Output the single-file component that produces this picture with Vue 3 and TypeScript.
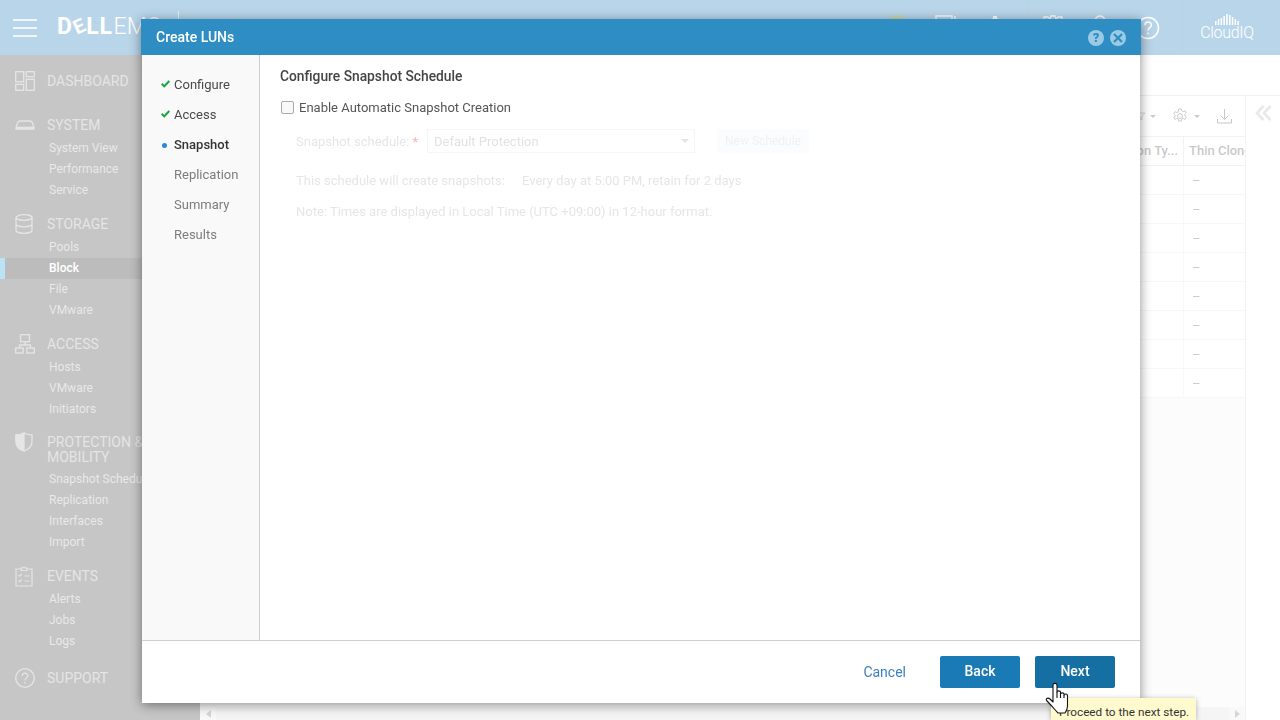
<script setup lang="ts">
interface NavGroup {
  icon: string
  title: string
  cls?: string
  items: string[]
}

const nav: NavGroup[] = [
  { icon: 'dash', title: 'DASHBOARD', cls: 'solo', items: [] },
  { icon: 'system', title: 'SYSTEM', items: ['System View', 'Performance', 'Service'] },
  { icon: 'storage', title: 'STORAGE', items: ['Pools', 'Block', 'File', 'VMware'] },
  { icon: 'access', title: 'ACCESS', items: ['Hosts', 'VMware', 'Initiators'] },
  { icon: 'shield', title: 'PROTECTION &\nMOBILITY', cls: 'tall', items: ['Snapshot Schedules', 'Replication', 'Interfaces', 'Import'] },
  { icon: 'events', title: 'EVENTS', cls: 'events', items: ['Alerts', 'Jobs', 'Logs'] },
  { icon: 'support', title: 'SUPPORT', cls: 'support', items: [] }
]

const steps = [
  { label: 'Configure', state: 'done' },
  { label: 'Access', state: 'done' },
  { label: 'Snapshot', state: 'active' },
  { label: 'Replication', state: 'todo' },
  { label: 'Summary', state: 'todo' },
  { label: 'Results', state: 'todo' }
]

const rows: number[] = [1, 2, 3, 4, 5, 6, 7, 8]
</script>

<template>
  <div class="shell">
    <header class="top">
      <div class="burger"><i></i><i></i><i></i></div>
      <div class="logo"><b>D<span class="tilt">E</span>LL</b><span class="emc">EMC</span></div>
      <div class="logo-sep"></div>
      <div class="top-fill"></div>
      <div class="cell"><span class="user-dot"></span></div>
      <div class="cell">
        <svg width="22" height="24" viewBox="0 0 22 24" fill="none" stroke="#fff" stroke-width="1.4"><rect x="1" y="1" width="16" height="14" /><path d="M4 5h8M20 1v14" /></svg>
      </div>
      <div class="cell">
        <svg width="20" height="24" viewBox="0 0 20 24" fill="#fff"><path d="M8 1h4v2c3 1 4 3 4 6v6l2 2H2l2-2V9c0-3 1-5 4-6z" /></svg>
      </div>
      <div class="cell first-right">
        <svg width="24" height="24" viewBox="0 0 24 24" fill="none" stroke="#fff" stroke-width="1.3"><path d="M3 2h4l2 2 1-3h4l1 3 2-2h4v14H3z" /></svg>
      </div>
      <div class="cell">
        <svg width="22" height="24" viewBox="0 0 22 24" fill="none" stroke="#fff" stroke-width="1.4"><circle cx="11" cy="6" r="5" /></svg>
      </div>
      <div class="cell">
        <svg width="24" height="24" viewBox="0 0 24 24" fill="none" stroke="#fff" stroke-width="1.5"><circle cx="12" cy="12" r="10.5" /><path d="M8.800 9.200c0-4.200 6.600-4.200 6.600-.2 0 2.600-3.300 2.800-3.300 5.600" /><path d="M12.100 16.400v1.800" /></svg>
      </div>
      <div class="cloud">
        <svg width="26" height="11" viewBox="0 0 26 11" fill="#fff"><path d="M1 7h1.500v4H1zM3.800 5h1.500v6H3.800zM6.600 4h1.500v7H6.600zM9.400 2h1.500v9H9.400zM12.200 0h1.500v11h-1.500zM15 1h1.500v10H15zM17.800 3h1.500v8h-1.500zM20.600 5h1.500v6h-1.500zM23.400 7h1.500v4h-1.500z" /></svg>
        <span>CloudIQ</span>
      </div>
    </header>

    <aside class="side">
      <section v-for="g in nav" :key="g.title" class="group" :class="g.cls">
        <div class="heading">
          <span class="ico">
            <svg v-if="g.icon === 'dash'" width="20" height="20" viewBox="0 0 20 20" fill="none" stroke="currentColor" stroke-width="1.3"><rect x="0.700" y="0.700" width="8" height="10" /><rect x="11.300" y="0.700" width="8" height="5" /><rect x="0.700" y="13.300" width="8" height="6" /><rect x="11.300" y="8.300" width="8" height="11" /></svg>
            <svg v-else-if="g.icon === 'system'" width="20" height="12" viewBox="0 0 20 12" fill="none" stroke="currentColor" stroke-width="1.3"><path d="M1 8.500l1.500-4.500C3 2.500 4 2 5 2h10c1 0 2 .5 2.500 2L19 8.500v1.500H1zM1 8.500h18" /></svg>
            <svg v-else-if="g.icon === 'storage'" width="18" height="20" viewBox="0 0 18 20" fill="none" stroke="currentColor" stroke-width="1.3"><ellipse cx="9" cy="3.500" rx="8" ry="2.800" /><path d="M1 3.500v13c0 1.500 3.500 2.800 8 2.800s8-1.300 8-2.800v-13M1 10c0 1.500 3.500 2.800 8 2.800s8-1.300 8-2.800" /></svg>
            <svg v-else-if="g.icon === 'access'" width="20" height="20" viewBox="0 0 20 20" fill="none" stroke="currentColor" stroke-width="1.300"><rect x="5.500" y="0.700" width="9" height="7" /><rect x="0.700" y="14" width="7.500" height="5" /><rect x="11.800" y="14" width="7.500" height="5" /><path d="M10 7.700v3.300M4.500 14v-3h11v3" /></svg>
            <svg v-else-if="g.icon === 'shield'" width="18" height="20" viewBox="0 0 18 20" fill="none" stroke="currentColor" stroke-width="1.300"><path d="M9 1c2.500 1.500 5 2 8 2v6c0 5-3.500 8.500-8 10C4.500 17.500 1 14 1 9V3c3 0 5.500-.5 8-2z" /><path d="M9 1c-2.500 1.500-5 2-8 2v6c0 5 3.500 8.500 8 10z" fill="currentColor" /></svg>
            <svg v-else-if="g.icon === 'events'" width="18" height="21" viewBox="0 0 18 21" fill="none" stroke="currentColor" stroke-width="1.200"><path d="M6 3H1v17h16V3h-5M6 4.500V2h2l1-1 1 1h2v2.500z" /><path d="M3.500 9l1.200 1.200L7 8M3.500 14.500l1.200 1.200L7 13.500M9.500 10h5M9.500 15h5" /></svg>
            <svg v-else width="20" height="20" viewBox="0 0 20 20" fill="none" stroke="currentColor" stroke-width="1.300"><circle cx="10" cy="10" r="9.300" /><path d="M7.300 7.800c0-3.500 5.500-3.500 5.500-.1 0 2.100-2.800 2.300-2.800 4.700M10 14v1.600" /></svg>
          </span>
          <span class="title">{{ g.title }}</span>
        </div>
        <div v-for="it in g.items" :key="it" class="item" :class="{ current: it === 'Block' }">{{ it }}</div>
      </section>
    </aside>

    <main class="page">
      <div class="page-head"></div>
      <div class="page-body">
        <div class="data">
          <div class="tools">
            <svg width="8" height="8" viewBox="0 0 8 8" fill="none" stroke="#777" stroke-width="1"><path d="M0 1h8L5 4v4L3 7V4z" /></svg>
            <span class="caret"></span>
            <svg class="gear" width="16" height="16" viewBox="0 0 16 16" fill="none" stroke="#555" stroke-width="1"><path d="M6.700 1h2.600l.4 2 1.500.7 1.800-1 1.300 2.300-1.500 1.300v1.500l1.500 1.300-1.300 2.300-1.800-1-1.500.7-.4 2H6.700l-.4-2-1.500-.7-1.800 1-1.300-2.300L3.200 8.700V7.200L1.700 5.900 3 3.600l1.800 1 1.500-.7z" /><circle cx="8" cy="8" r="2.500" /></svg>
            <span class="caret"></span>
            <svg class="dl" width="15" height="15" viewBox="0 0 15 15" fill="none" stroke="#444" stroke-width="1"><path d="M7.500 0v10M3.500 6.500l4 4 4-4M.500 10v4h14v-4" /></svg>
          </div>
          <div class="grid">
            <div class="tr th">
              <div class="c1">Protection Ty...</div>
              <div class="c2">Thin Clones</div>
            </div>
            <div v-for="r in rows" :key="r" class="tr td">
              <div class="c1"></div>
              <div class="c2">--</div>
            </div>
          </div>
          <div class="hscroll">
            <span class="arrow left"></span>
            <span class="thumb"></span>
            <span class="arrow right"></span>
          </div>
        </div>
        <div class="rail">
          <svg width="17" height="16" viewBox="0 0 17 16" fill="none" stroke="#b4b4b4" stroke-width="2.600"><path d="M8.500 1L2 8l6.500 7M15.500 1L9 8l6.500 7" /></svg>
        </div>
      </div>
    </main>

    <div class="veil"></div>

    <div class="modal">
      <div class="modal-head">
        <span>Create LUNs</span>
        <div class="head-icons">
          <span class="round">?</span>
          <span class="round">
            <svg width="10" height="10" viewBox="0 0 10 10" stroke="#2e8dc2" stroke-width="2.200"><path d="M1 1l8 8M9 1l-8 8" /></svg>
          </span>
        </div>
      </div>
      <div class="modal-body">
        <nav class="steps">
          <div v-for="s in steps" :key="s.label" class="step" :class="s.state">
            <span class="mark">
              <svg v-if="s.state === 'done'" width="9" height="8" viewBox="0 0 9 8" fill="none" stroke="#12a53c" stroke-width="2"><path d="M.7 3.800l2.500 2.600L8.300 1" /></svg>
              <i v-else-if="s.state === 'active'"></i>
            </span>
            {{ s.label }}
          </div>
        </nav>
        <section class="pane">
          <h2>Configure Snapshot Schedule</h2>
          <label class="enable"><span class="box"></span>Enable Automatic Snapshot Creation</label>
          <div class="off">
            <div class="off-row">
              <span class="off-label">Snapshot schedule:<em> *</em></span>
              <span class="select">Default Protection<i></i></span>
              <span class="new">New Schedule</span>
            </div>
            <div class="off-line"><span class="lead">This schedule will create snapshots:</span>Every day at 5:00 PM, retain for 2 days</div>
            <div class="off-line note">Note: Times are displayed in Local Time (UTC +09:00) in 12-hour format.</div>
          </div>
        </section>
      </div>
      <footer class="modal-foot">
        <span class="cancel">Cancel</span>
        <span class="btn back">Back</span>
        <span class="btn next">Next</span>
      </footer>
    </div>

    <div class="tip">Proceed to the next step.</div>
    <svg class="hand" width="26" height="33" viewBox="0 0 26 33" fill="#fff" stroke="#111" stroke-width="1.100" stroke-linejoin="round">
      <path d="M8 3C8 .8 12 .8 12 3v7c0-1.500 3.500-1.500 3.500 0v2c0-1.500 3.500-1.500 3.500 0v1c0-1.500 3.500-1.500 3.500.5V24c0 3-1 5-2.500 7h-7c-2-2-6-7-11-12-2-2 .5-4 3-2l3 3z" />
      <path d="M12 10v6M15.500 12v4M19 13v3" fill="none" />
    </svg>
  </div>
</template>

<style>
html, body { margin: 0; background: #fff; }
</style>

<style scoped>
.shell {
  position: relative;
  width: 1280px;
  height: 720px;
  overflow: hidden;
  display: grid;
  grid-template-columns: 200px 1fr;
  grid-template-rows: 55px 1fr;
  font-family: Roboto, "Liberation Sans", sans-serif;
  background: #fff;
}

/* top bar */
.top {
  grid-column: 1 / 3;
  display: flex;
  align-items: center;
  background: #1673b6;
  color: #fff;
}
.burger { width: 24px; margin-left: 13px; display: flex; flex-direction: column; gap: 6px; }
.burger i { display: block; height: 2px; background: #c8dcec; }
.logo { margin-left: 20px; width: 121px; display: flex; font-size: 23px; line-height: 24px; white-space: nowrap; position: relative; top: -1px; }
.logo b { font-weight: 700; letter-spacing: .7px; }
.tilt { display: inline-block; transform: rotate(-25deg) scale(.85); }
.emc { font-weight: 300; margin-left: 1px; }
.logo-sep { width: 1px; height: 34px; background: #a9c9e0; }
.top-fill { flex: 1; }
.cell { width: 49px; height: 55px; display: flex; align-items: flex-start; justify-content: center; padding-top: 15px; box-sizing: border-box; }
.cell.first-right { border-left: 1px solid #1268a8; margin-left: 9px; width: 48px; }
.cell:nth-last-child(2), .cell:nth-last-child(3) { width: 48px; }
.cell:nth-last-child(2) { padding-top: 16px; }
.user-dot { width: 24px; height: 24px; border-radius: 50%; background: #4b7600; }
.cloud {
  width: 52px;
  height: 55px;
  margin-left: 10px;
  padding: 0 27px 0 18px;
  border-left: 1px solid #1268a8;
  display: flex;
  flex-direction: column;
  align-items: center;
  justify-content: center;
  font-size: 16px;
  font-weight: 300;
  line-height: 17px;
  letter-spacing: -.3px;
}
.cloud svg { margin-bottom: -1px; }

/* sidebar */
.side {
  background: #414141;
  color: #a8a8a8;
  padding-top: 15px;
  overflow: hidden;
}
.group { margin-bottom: 12px; }
.group.solo { margin-bottom: 22px; }
.group.events { margin-bottom: 15px; }
.heading { display: flex; align-items: center; height: 22px; margin-bottom: 2px; }
.tall .heading { height: 35px; }
.solo .heading, .support .heading { margin-bottom: 0; }
.ico { width: 47px; padding-left: 15px; box-sizing: border-box; display: flex; align-items: center; flex: none; }
.ico svg { display: block; }
.tall .ico { align-self: flex-start; }
.title { font-size: 14px; line-height: 15px; white-space: pre-line; }
.item { height: 21px; line-height: 21px; font-size: 12px; padding-left: 49px; white-space: nowrap; color: #b4b4b4; }
.item.current { background: #1f1f1f; color: #fff; font-weight: 500; box-shadow: inset 5px 0 0 #1ba0e2; }

/* page */
.page { display: flex; flex-direction: column; min-width: 0; background: #fff; }
.page-head { height: 40px; flex: none; }
.page-body { flex: 1; display: flex; min-height: 0; border-top: 1px solid #c9c9c9; }
.data { flex: 1; min-width: 0; display: flex; flex-direction: column; background: #f4f4f4; }
.tools {
  height: 41px;
  flex: none;
  background: #fff;
  display: flex;
  align-items: center;
  justify-content: flex-end;
  padding-right: 13px;
  border-bottom: 1px solid #d2d2d2;
  box-sizing: border-box;
}
.caret { width: 0; height: 0; border: 3px solid transparent; border-top: 3.500px solid #555; border-bottom: 0; margin-left: 5px; }
.gear { margin-left: 16px; }
.tools .gear + .caret { margin-left: 6px; }
.dl { margin-left: 17px; }
.grid { flex: 1; display: flex; flex-direction: column; }
.tr { display: flex; justify-content: flex-end; height: 29px; box-sizing: border-box; flex: none; background: #fff; border-bottom: 1px solid #e4e4e4; }
.th { font-size: 13px; color: #4a4a4a; font-weight: 500; line-height: 28px; border-bottom: 1px solid #d2d2d2; }
.td { font-size: 12px; color: #444; line-height: 28px; }
.c1 { width: 144px; text-align: right; padding-right: 5px; box-sizing: border-box; white-space: nowrap; border-right: 1px solid #d2d2d2; }
.td .c1, .td .c2 { border-color: #ececec; }
.c2 { width: 61px; padding-left: 5px; box-sizing: border-box; white-space: nowrap; overflow: hidden; }
.td .c2 { padding-left: 9px; }
.hscroll { height: 13px; flex: none; display: flex; align-items: center; background: #ececec; }
.thumb { flex: 1; height: 13px; background: #dcdcdc; margin: 0 6px 0 5px; }
.arrow { width: 0; height: 0; border: 4px solid transparent; }
.arrow.left { border-right: 5px solid #777; border-left: 0; margin-left: 6px; }
.arrow.right { border-left: 5px solid #777; border-right: 0; margin-right: 5px; }
.rail { width: 35px; flex: none; border-left: 1px solid #d2d2d2; background: #fff; box-sizing: border-box; padding: 9px 0 0 9px; }
.rail svg { display: block; }

/* veil and dialog */
.veil { position: absolute; inset: 0; background: rgba(255, 255, 255, .7); }
.modal {
  position: absolute;
  left: 141px;
  top: 19px;
  width: 1000px;
  height: 684px;
  display: flex;
  flex-direction: column;
  filter: drop-shadow(0 2px 6px rgba(0, 0, 0, .45));
}
.modal-head {
  height: 36px;
  flex: none;
  display: flex;
  align-items: center;
  justify-content: space-between;
  padding: 0 15px 1px 15px;
  box-sizing: border-box;
  background: #2e8dc2;
  color: #fff;
  font-size: 14px;
  font-weight: 500;
}
.head-icons { display: flex; gap: 6px; position: relative; top: 1px; }
.round { width: 16px; height: 16px; border-radius: 50%; background: #9ccae4; color: #2e8dc2; display: flex; align-items: center; justify-content: center; font-size: 13px; font-weight: 900; }
.modal-body { flex: 1; display: flex; min-height: 0; margin: 0 1px; background: #fff; }
.steps { width: 117px; flex: none; padding-top: 15px; box-sizing: content-box; background: #f9f9f9; border-right: 1px solid #cfcfcf; }
.step { height: 30px; line-height: 30px; font-size: 13px; display: flex; color: #7d7d7d; }
.step.done { color: #4a4a4a; }
.step.active { color: #333; font-weight: 500; }
.mark { width: 32px; padding-left: 19px; box-sizing: border-box; display: flex; align-items: center; flex: none; }
.mark svg { margin-top: -2px; }
.mark i { width: 5px; height: 5px; margin-left: 1px; border-radius: 50%; background: #2e86d8; }
.pane { flex: 1; padding: 0 20px; min-width: 0; }
.pane h2 { margin: 0; padding-top: 13px; font-size: 13.800px; line-height: 17px; font-weight: 500; color: #444; }
.enable { display: flex; align-items: center; height: 20px; margin-top: 12px; font-size: 13px; color: #555; }
.box { width: 11px; height: 11px; margin: 0 5px 0 1px; border: 1px solid #aaa; border-radius: 2px; background: #f8f8f8; }
.off { padding-left: 16px; color: #e6e6e6; font-size: 13px; }
.off-row { display: flex; align-items: center; height: 24px; margin-top: 12px; }
.off-label { width: 131px; flex: none; }
.off-label em { font-style: normal; color: #f8b4b4; }
.select {
  position: relative;
  width: 268px;
  height: 24px;
  line-height: 24px;
  box-sizing: border-box;
  padding-left: 6px;
  border: 1px solid #f6f6f6;
  color: #e2e2e2;
}
.select i { position: absolute; right: 5px; top: 9px; width: 0; height: 0; border: 4px solid transparent; border-top: 4px solid #e4e4e4; border-bottom: 0; }
.new { width: 92px; height: 24px; margin-left: 22px; line-height: 24px; text-align: center; font-size: 12px; background: #fbfcfd; border-radius: 2px; color: #eff2f4; }
.off-line { margin-top: 20px; line-height: 16px; }
.off-line.note { margin-top: 15px; }
.lead { display: inline-block; width: 226px; }
.modal-foot {
  height: 62px;
  flex: none;
  margin: 0 1px;
  background: #fff;
  border-top: 1px solid #cfcfcf;
  box-sizing: content-box;
  display: flex;
  align-items: center;
  justify-content: flex-end;
  padding-right: 25px;
  width: 973px;
}
.cancel { margin-right: 34px; font-size: 14px; color: #3c7fc0; }
.btn { width: 80px; height: 32px; line-height: 31px; text-align: center; color: #fff; font-size: 14px; font-weight: 500; border-radius: 2px; }
.back { background: #1a7ab5; }
.next { margin-left: 15px; background: #156fa3; }
.tip {
  position: absolute;
  left: 1051px;
  top: 698px;
  width: 145px;
  height: 22px;
  box-sizing: border-box;
  padding: 7px 0 0 8px;
  background: #ffface;
  color: #333;
  font-size: 11.750px;
  line-height: 14px;
  white-space: nowrap;
  box-shadow: 0 1px 5px rgba(0, 0, 0, .3);
}
.hand { position: absolute; left: 1045px; top: 682px; }
</style>
